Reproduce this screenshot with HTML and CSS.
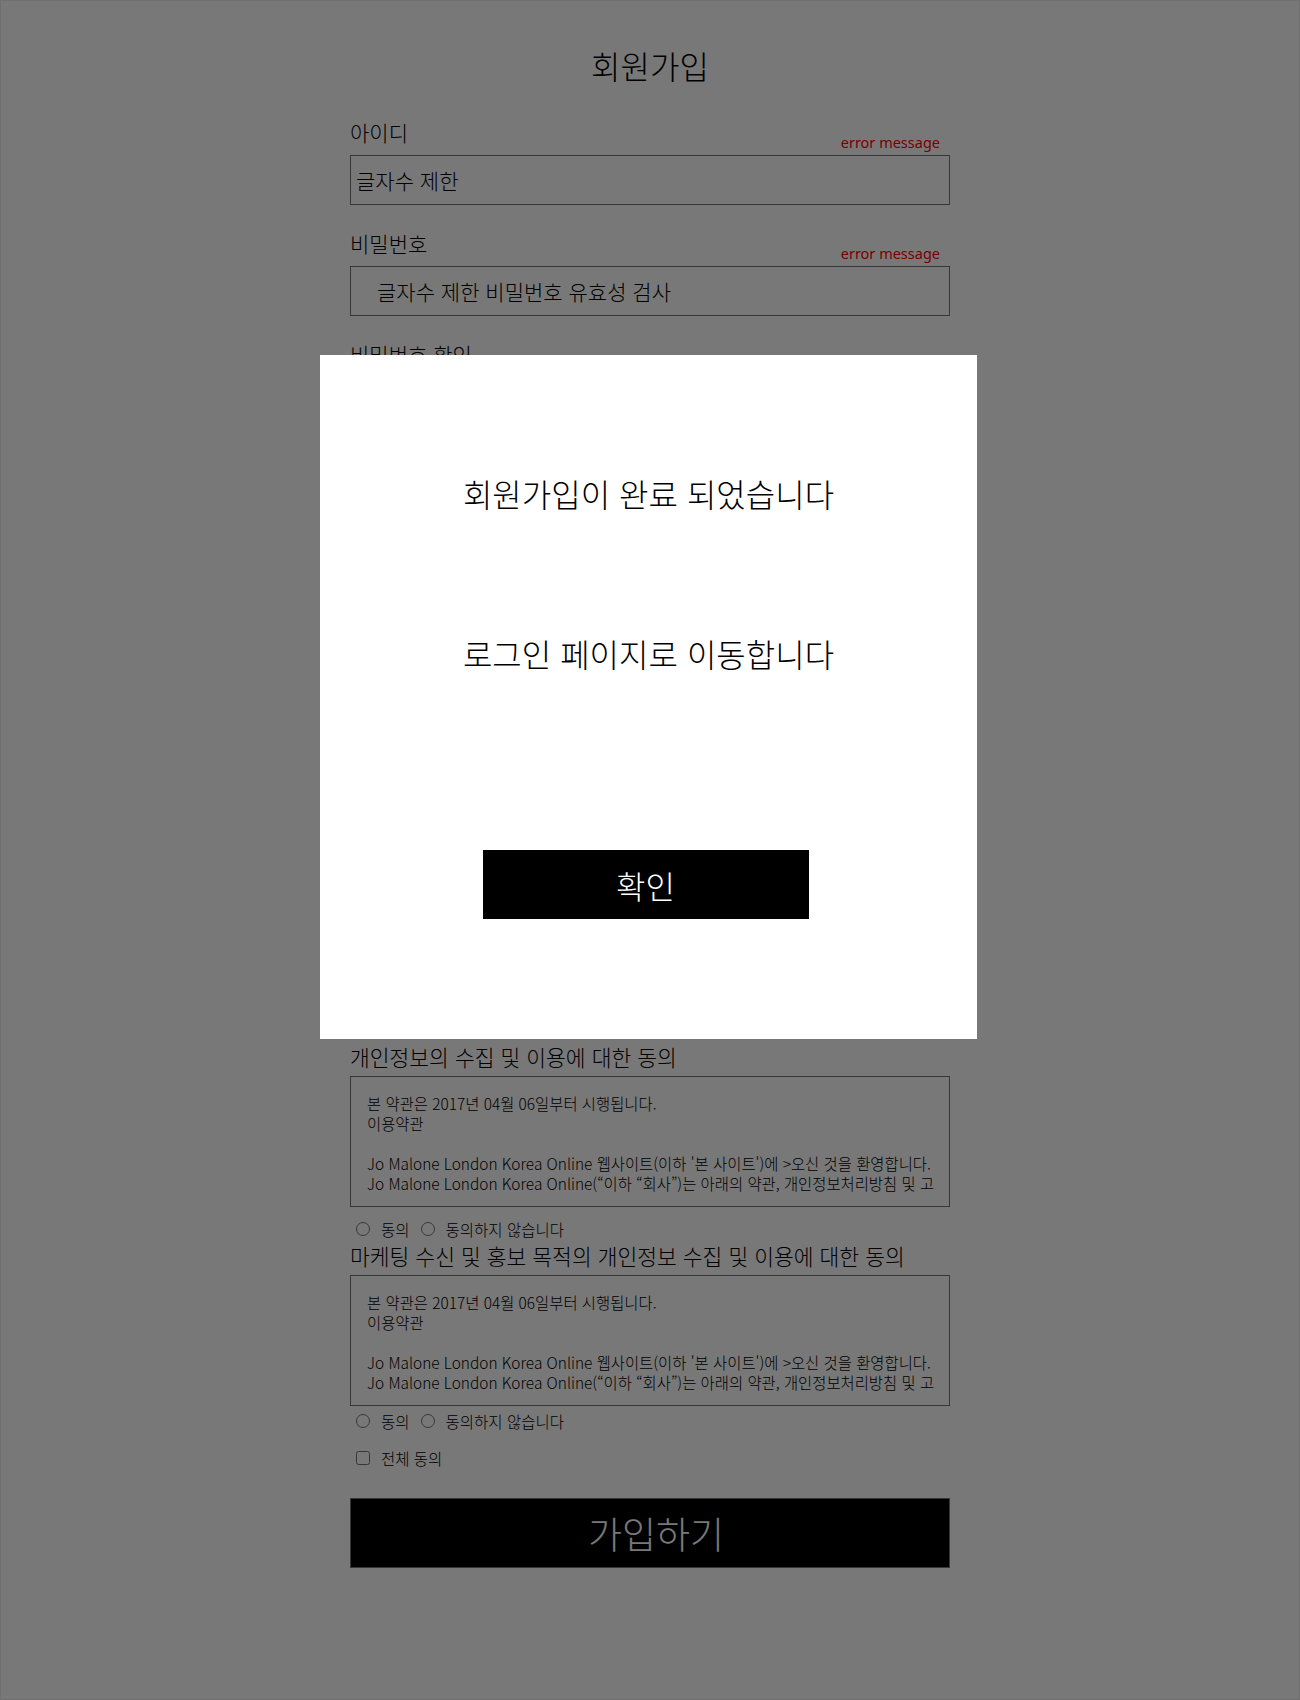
FILE: index.html
```html
<!DOCTYPE html>
<html lang="ko">
<head>
  <meta charset="UTF-8">
  <title>회원가입</title>
  <link rel="stylesheet" href="styles.css">
</head>
<body>
  <div class="join">
    <h1>회원가입</h1>

    <div class="field">
      <div class="field-head">
        <label>아이디</label>
        <span class="error">error message</span>
      </div>
      <input type="text" value="글자수 제한">
    </div>

    <div class="field">
      <div class="field-head">
        <label>비밀번호</label>
        <span class="error">error message</span>
      </div>
      <input type="text" class="indent" value="글자수 제한 비밀번호 유효성 검사">
    </div>

    <div class="field">
      <div class="field-head">
        <label>비밀번호 확인</label>
        <span class="error">error message</span>
      </div>
      <input type="password">
    </div>

    <div class="field">
      <div class="field-head">
        <label>이름</label>
        <span class="error">error message</span>
      </div>
      <input type="text">
    </div>

    <div class="field">
      <div class="field-head">
        <label>생년월일</label>
        <span class="error">error message</span>
      </div>
      <input type="text">
    </div>

    <div class="field">
      <div class="field-head">
        <label>이메일</label>
        <span class="error">error message</span>
      </div>
      <input type="text">
    </div>

    <div class="field">
      <div class="field-head">
        <label>휴대폰 번호</label>
        <span class="error">error message</span>
      </div>
      <input type="text">
    </div>

    <div class="field">
      <div class="field-head">
        <label>주소</label>
        <span class="error">error message</span>
      </div>
      <input type="text">
    </div>

    <div class="terms">
      <div class="terms-title">개인정보의 수집 및 이용에 대한 동의</div>
      <div class="terms-box">
        본 약관은 2017년 04월 06일부터 시행됩니다.<br>
        이용약관<br>
        <br>
        Jo Malone London Korea Online 웹사이트(이하 '본 사이트')에 &gt;오신 것을 환영합니다.<br>
        Jo Malone London Korea Online(“이하 “회사”)는 아래의 약관, 개인정보처리방침 및 고
      </div>
      <div class="choice first">
        <input type="radio" name="agree1" id="agree1y"><label for="agree1y">동의</label>
        <input type="radio" name="agree1" id="agree1n"><label for="agree1n">동의하지 않습니다</label>
      </div>

      <div class="terms-title second">마케팅 수신 및 홍보 목적의 개인정보 수집 및 이용에 대한 동의</div>
      <div class="terms-box">
        본 약관은 2017년 04월 06일부터 시행됩니다.<br>
        이용약관<br>
        <br>
        Jo Malone London Korea Online 웹사이트(이하 '본 사이트')에 &gt;오신 것을 환영합니다.<br>
        Jo Malone London Korea Online(“이하 “회사”)는 아래의 약관, 개인정보처리방침 및 고
      </div>
      <div class="choice">
        <input type="radio" name="agree2" id="agree2y"><label for="agree2y">동의</label>
        <input type="radio" name="agree2" id="agree2n"><label for="agree2n">동의하지 않습니다</label>
      </div>

      <div class="choice all">
        <input type="checkbox" id="agreeAll"><label for="agreeAll">전체 동의</label>
      </div>
    </div>

    <button class="submit">가입하기</button>
  </div>

  <div class="dim"></div>
  <div class="popup">
    <p class="popup-msg">회원가입이 완료 되었습니다</p>
    <p class="popup-msg next">로그인 페이지로 이동합니다</p>
    <button class="popup-btn">확인</button>
  </div>
</body>
</html>
```

FILE: styles.css
```css
body {
  margin: 0;
  background: #fff;
  color: #000;
  font-family: "Noto Sans CJK KR", sans-serif;
  font-weight: 300;
}

.join {
  width: 600px;
  margin: 0 auto;
  padding-bottom: 120px;
}

h1 {
  margin: 45px 0 35px;
  font-size: 32px;
  line-height: 40px;
  font-weight: 300;
  text-align: center;
}

.field {
  margin-bottom: 26px;
}

.field-head {
  display: flex;
  justify-content: space-between;
  height: 35px;
}

.field-head label {
  font-size: 21px;
  line-height: 24px;
}

.error {
  align-self: flex-end;
  margin: 0 10px 3px 0;
  color: #ff0000;
  font-family: "Noto Sans", sans-serif;
  font-weight: 400;
  font-size: 14.5px;
  line-height: 20px;
}

.field input {
  display: block;
  box-sizing: border-box;
  width: 100%;
  height: 50px;
  margin: 0;
  padding: 0 5px;
  border: 1px solid #767676;
  background: #fff;
  color: #000;
  font-family: "Noto Sans CJK KR", sans-serif;
  font-weight: 300;
  font-size: 21px;
  outline: none;
}

.field input.indent {
  padding-left: 26px;
}

/* 마지막 필드의 margin-bottom 26px와 겹치지 않게 */
.terms {
  padding-top: 36px;
}

.terms-title {
  margin-bottom: 6px;
  font-size: 21.5px;
  line-height: 26px;
}

.terms-title.second {
  margin-top: 4px;
}

.terms-box {
  box-sizing: border-box;
  height: 131px;
  padding: 16px 16px 0;
  border: 1px solid #767676;
  font-size: 15.4px;
  line-height: 20px;
  white-space: nowrap;
  overflow: hidden;
}

.choice {
  display: flex;
  align-items: center;
  height: 20px;
  margin-top: 5px;
  font-size: 15.5px;
}

.choice.first {
  margin-top: 12px;
}

.choice.all {
  margin-top: 17px;
}

.choice input {
  width: 14px;
  height: 14px;
  margin: 0 11px 0 6px;
}

.choice label {
  margin-right: 5px;
}

.submit {
  display: block;
  box-sizing: border-box;
  width: 100%;
  height: 70px;
  margin-top: 30px;
  padding-left: 18px;
  border: 1px solid #767676;
  background: #000;
  color: #fff;
  font-family: "Noto Sans CJK KR", sans-serif;
  font-weight: 300;
  font-size: 37px;
}

/* 팝업 */
.dim {
  position: fixed;
  top: 0;
  left: 0;
  right: 0;
  bottom: 0;
  background: rgba(0, 0, 0, 0.53);
  box-shadow: inset 0 0 0 1px rgba(0, 0, 0, 0.08);
}

.popup {
  position: absolute;
  top: 355px;
  left: 320px;
  width: 657px;
  height: 684px;
  box-sizing: border-box;
  padding-top: 118px;
  background: #fff;
  display: flex;
  flex-direction: column;
  align-items: center;
}

.popup-msg {
  margin: 0;
  font-size: 32px;
  line-height: 40px;
}

.popup-msg.next {
  margin-top: 120px;
}

.popup-btn {
  width: 326px;
  height: 69px;
  margin: 177px 6px 0 0;
  border: none;
  background: #000;
  color: #fff;
  font-family: "Noto Sans CJK KR", sans-serif;
  font-weight: 300;
  font-size: 32px;
}
```
